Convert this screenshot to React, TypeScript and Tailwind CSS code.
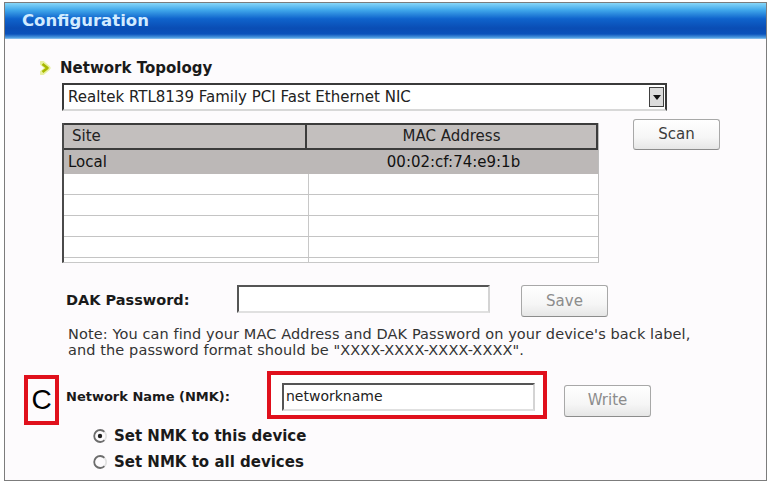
function Arrow() {
  return (
    <svg width="12" height="14" viewBox="0 0 12 14" className="mr-[8px]">
      <path d="M2 2 L8 7 L2 12" fill="none" stroke="#e8f0a0" strokeWidth="5" strokeLinecap="round" strokeLinejoin="round" />
      <path d="M2.5 3 L7.5 7 L2.5 11" fill="none" stroke="#a8b800" strokeWidth="2.6" strokeLinejoin="round" />
    </svg>
  );
}

function Radio({ checked }: { checked?: boolean }) {
  return (
    <svg width="14" height="14" viewBox="0 0 14 14">
      <path d="M11.5 2.8 A6 6 0 1 0 11.5 11.2" fill="none" stroke="#6c6c6c" strokeWidth="1.8" />
      <path d="M11.5 11.2 A6 6 0 0 0 11.5 2.8" fill="none" stroke="#e2e2e2" strokeWidth="1.8" />
      {checked && <circle cx="7" cy="7" r="2.2" fill="#202020" />}
    </svg>
  );
}

function Btn({ label, dim, w, h }: { label: string; dim?: boolean; w: string; h: string }) {
  return (
    <div
      className={`${w} ${h} flex items-center justify-center rounded-[3px] border border-[#a8a8a8] border-b-[#8c8c8c] bg-[linear-gradient(to_bottom,#ffffff,#f6f6f6_60%,#e6e6e6)] text-[15px] ${dim ? "text-[#8c8c8c]" : "text-[#3c3c3c]"}`}
    >
      {label}
    </div>
  );
}

const rows = [0, 1, 2, 3];

export default function App() {
  return (
    <div className="w-[768px] h-[482px] bg-white font-['DejaVu_Sans',sans-serif] overflow-hidden">
      <div className="ml-[4px] mt-[2px] w-[763px] h-[479px] border border-[#7c7c7c] bg-[#fdfbfd] flex flex-col">
        <div className="h-[36px] shrink-0 bg-[linear-gradient(to_bottom,#86d6f8_0%,#3fa6ea_20%,#0f63cc_44%,#0a4db4_70%,#0b52bb_86%,#4e9be0_96%,#9ccaf0_100%)] flex items-center pl-[17px]">
          <span className="text-[16.5px] font-bold text-[#d2ebff]">Configuration</span>
        </div>

        <div className="flex items-center ml-[35px] mt-[19px] h-[20px]">
          <Arrow />
          <span className="text-[15px] font-bold text-[#1a1a1a]">Network Topology</span>
        </div>

        <div className="ml-[57px] mt-[5px] w-[605px] h-[28px] flex items-center border-2 border-t-[#3a3a3a] border-l-[#3a3a3a] border-r-[#3a3a3a] border-b-[#d8d8d8] bg-white">
          <span className="flex-1 pl-[4px] text-[15px] text-[#222]">Realtek RTL8139 Family PCI Fast Ethernet NIC</span>
          <div className="w-[15px] h-[20px] mr-[1px] flex items-center justify-center border border-[#404040] bg-[#dcdcdc]">
            <svg width="8" height="5" viewBox="0 0 8 5">
              <path d="M0 0 L8 0 L4 5 Z" fill="#111" />
            </svg>
          </div>
        </div>

        <div className="flex items-start mt-[12px]">
          <div className="ml-[57px] w-[537px] h-[140px] flex flex-col border-l-2 border-l-[#4a4a4a] border-r border-r-[#bdbdbd] border-b border-b-[#c8c8c8]">
            <div className="h-[27px] flex bg-[#c3bfbe] border-t-2 border-b-2 border-[#3c3c3c] border-r-2 border-r-[#3c3c3c] text-[15px] text-[#222]">
              <div className="w-[243px] pl-[8px] flex items-center border-r-2 border-[#3c3c3c]">Site</div>
              <div className="flex-1 flex items-center justify-center">MAC Address</div>
            </div>
            <div className="h-[24px] flex bg-[#bcb8b7] text-[15px] text-[#111]">
              <div className="w-[245px] pl-[4px] flex items-center">Local</div>
              <div className="flex-1 flex items-center justify-center">00:02:cf:74:e9:1b</div>
            </div>
            {rows.map((r) => (
              <div key={r} className="h-[21px] flex border-b border-[#c4c4c4] bg-white">
                <div className="w-[245px] border-r border-[#c8c8c8]" />
                <div className="flex-1" />
              </div>
            ))}
            <div className="flex-1 flex bg-white">
              <div className="w-[245px] border-r border-[#c8c8c8]" />
            </div>
          </div>
          <div className="ml-[34px] -mt-[4px]">
            <Btn label="Scan" w="w-[87px]" h="h-[31px]" />
          </div>
        </div>

        <div className="flex items-center mt-[22px] h-[32px]">
          <span className="ml-[61px] w-[171px] text-[14.5px] font-bold text-[#1a1a1a]">DAK Password:</span>
          <div className="w-[253px] h-[28px] -mt-[4px] border-2 border-t-[#555] border-l-[#555] border-r-[#d4d4d4] border-b-[#e0e0e0] bg-white" />
          <div className="ml-[31px]">
            <Btn label="Save" dim w="w-[87px]" h="h-[32px]" />
          </div>
        </div>

        <div className="ml-[63px] mt-[9px] text-[14.5px] leading-[16px] text-[#333] tracking-[0.1px]">
          <div>Note: You can find your MAC Address and DAK Password on your device's back label,</div>
          <div>and the password format should be "XXXX-XXXX-XXXX-XXXX".</div>
        </div>

        <div className="flex items-center mt-[12px] h-[53px]">
          <div className="ml-[19px] w-[35px] h-[50px] mt-[6px] border-4 border-[#e0101c] flex items-center justify-center">
            <span className="font-['Liberation_Sans',sans-serif] text-[28px] text-black">C</span>
          </div>
          <span className="ml-[7px] w-[201px] text-[13px] font-bold text-[#1a1a1a]">Network Name (NMK):</span>
          <div className="w-[280px] h-[48px] -mt-[4px] border-4 border-[#e0101c] bg-white pl-[11px] pt-[8px]">
            <div className="w-[253px] h-[28px] border-2 border-t-[#555] border-l-[#555] border-r-[#d4d4d4] border-b-[#e0e0e0] flex items-center pl-[2px] text-[14px] text-[#222]">
              networkname
            </div>
          </div>
          <div className="ml-[17px] mt-[8px]">
            <Btn label="Write" dim w="w-[87px]" h="h-[32px]" />
          </div>
        </div>

        <div className="flex items-center ml-[88px] mt-[2px] h-[22px] gap-[7px]">
          <Radio checked />
          <span className="text-[15px] font-bold text-[#1a1a1a]">Set NMK to this device</span>
        </div>
        <div className="flex items-center ml-[88px] mt-[4px] h-[22px] gap-[7px]">
          <Radio />
          <span className="text-[15px] font-bold text-[#1a1a1a]">Set NMK to all devices</span>
        </div>
      </div>
    </div>
  );
}
